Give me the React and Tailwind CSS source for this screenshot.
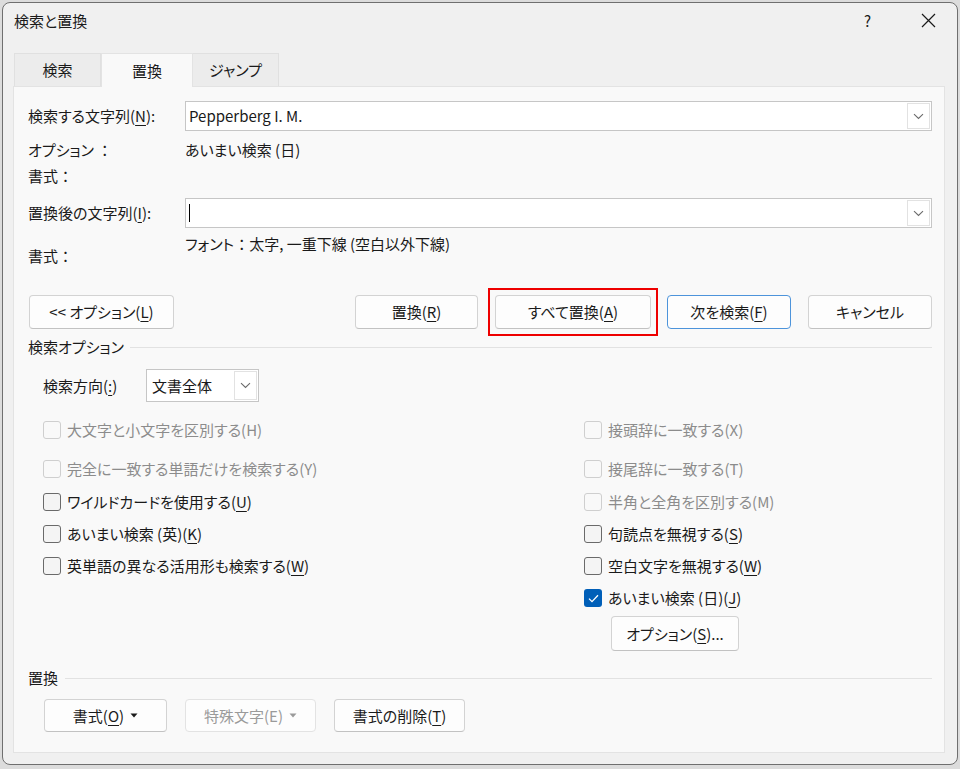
import React from 'react';

// 「検索と置換」ダイアログ (置換タブ)
const U = ({ children }) => (
  <span className="underline decoration-1 underline-offset-[3px]">{children}</span>
);

// 全角コロンは詰めない
const Colon = () => <span className="[font-feature-settings:normal]">：</span>;

function Chevron() {
  return (
    <svg width="11" height="7" viewBox="0 0 11 7" fill="none">
      <path d="M1 1.2l4.5 4.3L10 1.2" stroke="#6b6b6b" strokeWidth="1.1" />
    </svg>
  );
}

function Caret({ color = '#1a1a1a' }) {
  return (
    <svg width="8" height="5" viewBox="0 0 8 5" className="ml-[6px]">
      <path d="M0.5 0.5h7L4 4.5z" fill={color} />
    </svg>
  );
}

function Button({ children, className = '', primary, disabled }) {
  return (
    <div
      className={
        'flex items-center justify-center rounded-[4px] border bg-[#fdfdfd] ' +
        (primary
          ? 'border-[#4d94db] '
          : disabled
          ? 'border-[#e3e3e3] text-[#9a9a9a] '
          : 'border-[#d3d3d3] border-b-[#c2c2c2] ') +
        className
      }
    >
      {children}
    </div>
  );
}

function Check({ label, disabled, checked, className = '' }) {
  return (
    <div className={'flex h-[32px] items-center ' + className}>
      {checked ? (
        <div className="flex h-[18px] w-[18px] items-center justify-center rounded-[3px] bg-[#005fb8]">
          <svg width="11" height="9" viewBox="0 0 11 9" fill="none">
            <path d="M1 4.6l3 3L10 1.3" stroke="#fff" strokeWidth="1.3" />
          </svg>
        </div>
      ) : (
        <div
          className={
            'h-[18px] w-[18px] rounded-[3px] border ' +
            (disabled ? 'border-[#cfcfcf] bg-[#f9f9f9]' : 'border-[#6a6a6a] bg-[#f4f4f4]')
          }
        />
      )}
      <span className={'ml-[6px] ' + (disabled ? 'text-[#8c8c8c]' : 'text-[#1a1a1a]')}>{label}</span>
    </div>
  );
}

function Combo({ children, className = '' }) {
  return (
    <div className={'flex items-stretch border border-[#c6c6c6] bg-white ' + className}>
      <div className="flex flex-1 items-center pl-[3px]">{children}</div>
      <div className="my-px mr-px flex w-[23px] items-center justify-center border border-[#e2e2e2] bg-white">
        <Chevron />
      </div>
    </div>
  );
}

export default function App() {
  return (
    <div className="h-[769px] w-[960px] overflow-hidden bg-[#dcdcdc] pl-[2px] pt-[2px] font-['Noto_Sans_CJK_JP','Noto_Sans',sans-serif] text-[15px] leading-[20px] text-[#1a1a1a] [font-feature-settings:'palt']">
      <div className="flex h-[763px] w-[956px] flex-col rounded-[8px] border border-[#6f6f6f] bg-[#f0f0f0]">
        {/* title bar */}
        <div className="flex h-[35px] items-center pl-[11px] pr-[21px]">
          <span>検索と置換</span>
          <span className="ml-auto text-[15px]">?</span>
          <svg width="15" height="15" viewBox="0 0 15 15" className="ml-[50px]">
            <path d="M1 1l13 13M14 1L1 14" stroke="#1a1a1a" strokeWidth="1.2" />
          </svg>
        </div>

        {/* tabs */}
        <div className="mt-[15px] flex h-[33px] items-stretch pl-[11px]">
          <div className="flex w-[87px] items-center justify-center border border-b-0 border-[#e0e0e0] bg-[#ececec]">検索</div>
          <div className="z-10 -mb-px flex w-[92px] items-center justify-center border border-b-0 border-[#e3e3e3] bg-[#f9f9f9]">置換</div>
          <div className="flex w-[86px] items-center justify-center border border-b-0 border-l-0 border-[#e0e0e0] bg-[#ececec]">ジャンプ</div>
        </div>

        {/* panel */}
        <div className="ml-[10px] flex h-[667px] w-[932px] flex-col border border-[#e3e3e3] bg-[#f9f9f9] pl-[14px] pr-[12px]">
          <div className="mt-[14px] flex h-[30px] items-center">
            <span className="w-[157px]">検索する文字列(<U>N</U>):</span>
            <Combo className="h-[30px] flex-1">
              <span>Pepperberg I. M.</span>
            </Combo>
          </div>
          <div className="mt-[6px] flex h-[26px] items-center">
            <span className="w-[157px]">オプション <Colon /></span>
            <span>あいまい検索 (日)</span>
          </div>
          <div className="flex h-[26px] items-center">
            <span>書式<Colon /></span>
          </div>

          <div className="mt-[9px] flex h-[30px] items-center">
            <span className="w-[157px]">置換後の文字列(<U>I</U>):</span>
            <Combo className="h-[30px] flex-1">
              <div className="h-[18px] w-px bg-black" />
            </Combo>
          </div>
          <div className="flex h-[40px]">
            <span className="mt-[16px] w-[157px] leading-[24px]">書式<Colon /></span>
            <span className="mt-[4px] leading-[24px]">
              フォント<Colon />太字, 一重下線 (空白以外下線)
            </span>
          </div>

          {/* main buttons */}
          <div className="mt-[27px] flex h-[34px]">
            <Button className="ml-px w-[145px]">
              {'<< '}オプション(<U>L</U>)
            </Button>
            <div className="flex-1" />
            <Button className="w-[123px]">
              置換(<U>R</U>)
            </Button>
            <div className="ml-[17px] outline-2 outline-offset-[5px] outline-[#ee0000]">
              <Button className="h-full w-[156px]">
                すべて置換(<U>A</U>)
              </Button>
            </div>
            <Button primary className="ml-[16px] w-[124px]">
              次を検索(<U>F</U>)
            </Button>
            <Button className="ml-[17px] w-[124px]">キャンセル</Button>
          </div>

          {/* search options */}
          <div className="mt-[8px] flex h-[20px] items-center">
            <span>検索オプション</span>
            <div className="ml-[6px] h-px flex-1 bg-[#e2e2e2]" />
          </div>
          <div className="ml-[15px] mt-[12px] flex h-[33px] items-center">
            <span className="w-[103px]">検索方向(<U>:</U>)</span>
            <Combo className="h-[33px] w-[113px]">
              <span className="pl-[2px]">文書全体</span>
            </Combo>
          </div>

          <div className="mt-[12px] grid grid-cols-[541px_1fr] pl-[15px]">
            <div className="flex flex-col">
              <Check disabled label="大文字と小文字を区別する(H)" />
              <Check disabled className="mt-[7px]" label="完全に一致する単語だけを検索する(Y)" />
              <Check className="mt-px" label={<>ワイルドカードを使用する(<U>U</U>)</>} />
              <Check label={<>あいまい検索 (英)(<U>K</U>)</>} />
              <Check label={<>英単語の異なる活用形も検索する(<U>W</U>)</>} />
            </div>
            <div className="flex flex-col">
              <Check disabled label="接頭辞に一致する(X)" />
              <Check disabled className="mt-[7px]" label="接尾辞に一致する(T)" />
              <Check disabled className="mt-px" label="半角と全角を区別する(M)" />
              <Check label={<>句読点を無視する(<U>S</U>)</>} />
              <Check label={<>空白文字を無視する(<U>W</U>)</>} />
              <Check checked label={<>あいまい検索 (日)(<U>J</U>)</>} />
              <Button className="ml-[27px] mt-[2px] h-[35px] w-[128px]">
                オプション(<U>S</U>)...
              </Button>
            </div>
          </div>

          {/* replace section */}
          <div className="mt-[17px] flex h-[20px] items-center">
            <span>置換</span>
            <div className="ml-[7px] h-px flex-1 bg-[#e2e2e2]" />
          </div>
          <div className="ml-[16px] mt-[11px] flex h-[33px] gap-[18px]">
            <Button className="w-[123px]">
              書式(<U>O</U>)
              <Caret />
            </Button>
            <Button disabled className="w-[131px]">
              特殊文字(E)
              <Caret color="#9a9a9a" />
            </Button>
            <Button className="w-[131px]">
              書式の削除(<U>T</U>)
            </Button>
          </div>
        </div>
      </div>
    </div>
  );
}
